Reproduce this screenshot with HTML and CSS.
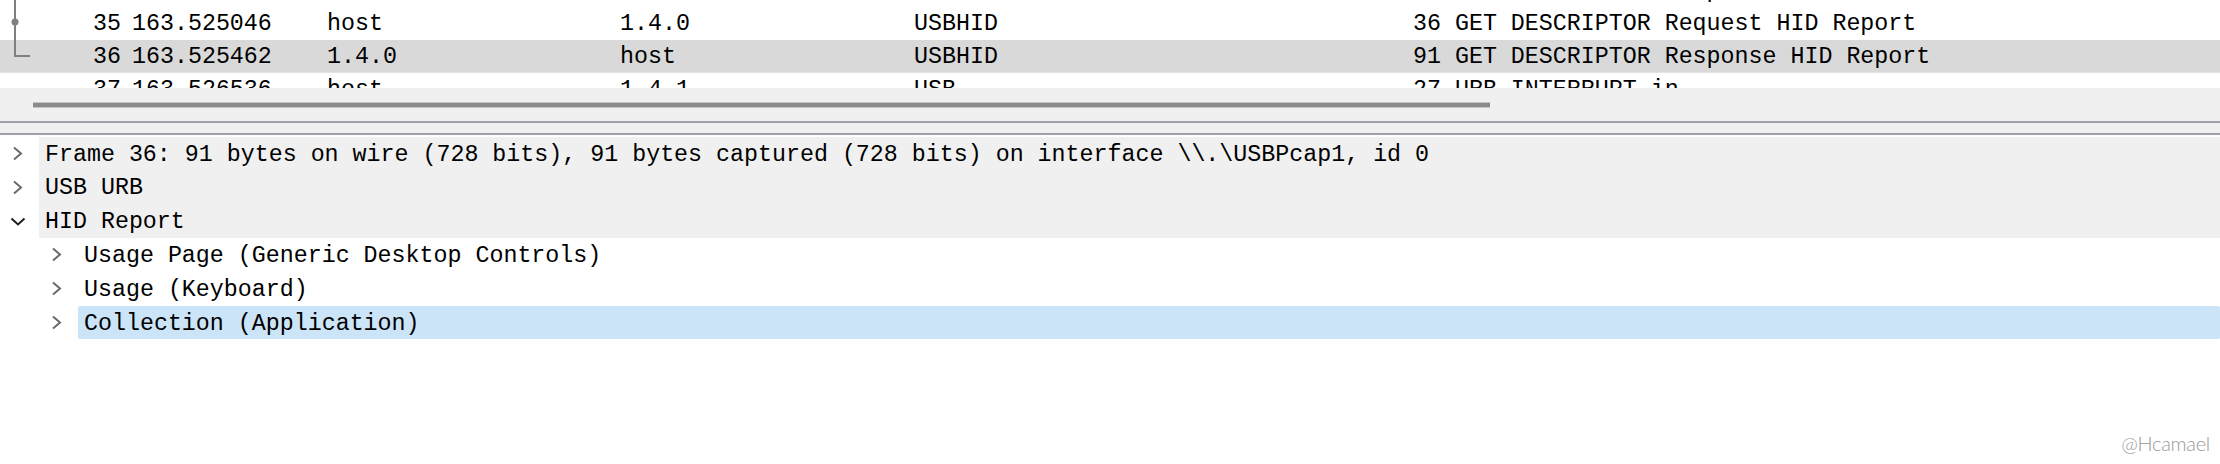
FILE: index.html
```html
<!DOCTYPE html>
<html>
<head>
<meta charset="utf-8">
<link rel="stylesheet" href="styles.css">
</head>
<body>
<div class="app">
  <div class="packet-list">
    <div class="pkt-inner">
      <div class="pkt-row">
        <div class="c-no"><svg class="rel" width="34" height="33" viewBox="0 0 34 33"><line x1="15" y1="0" x2="15" y2="33"/></svg><span>34</span></div>
        <div class="c">163.524807</div>
        <div class="c">1.4.0</div>
        <div class="c">host</div>
        <div class="c">USB</div>
        <div class="c">64 GET DESCRIPTOR Response DEVICE</div>
      </div>
      <div class="pkt-row">
        <div class="c-no"><svg class="rel" width="34" height="33" viewBox="0 0 34 33"><line x1="15" y1="0" x2="15" y2="33"/><circle cx="15" cy="15" r="3.5"/></svg><span>35</span></div>
        <div class="c">163.525046</div>
        <div class="c">host</div>
        <div class="c">1.4.0</div>
        <div class="c">USBHID</div>
        <div class="c">36 GET DESCRIPTOR Request HID Report</div>
      </div>
      <div class="pkt-row sel">
        <div class="c-no"><svg class="rel" width="34" height="33" viewBox="0 0 34 33"><polyline points="15,0 15,16 30,16"/></svg><span>36</span></div>
        <div class="c">163.525462</div>
        <div class="c">1.4.0</div>
        <div class="c">host</div>
        <div class="c">USBHID</div>
        <div class="c">91 GET DESCRIPTOR Response HID Report</div>
      </div>
      <div class="pkt-row">
        <div class="c-no"><span>37</span></div>
        <div class="c">163.526536</div>
        <div class="c">host</div>
        <div class="c">1.4.1</div>
        <div class="c">USB</div>
        <div class="c">27 URB_INTERRUPT in</div>
      </div>
    </div>
  </div>
  <div class="hscroll"><div class="thumb"></div></div>
  <div class="splitter"></div>
  <div class="details">
    <div class="drow lvl0">
      <div class="arrow"><svg width="11" height="15" viewBox="0 0 11 15"><polyline class="chev" points="2,1.5 9,7.5 2,13.5"/></svg></div>
      <div class="label shade">Frame 36: 91 bytes on wire (728 bits), 91 bytes captured (728 bits) on interface \\.\USBPcap1, id 0</div>
    </div>
    <div class="drow lvl0">
      <div class="arrow"><svg width="11" height="15" viewBox="0 0 11 15"><polyline class="chev" points="2,1.5 9,7.5 2,13.5"/></svg></div>
      <div class="label shade">USB URB</div>
    </div>
    <div class="drow lvl0">
      <div class="arrow down"><svg width="16" height="9" viewBox="0 0 16 9"><polyline class="chev dark" points="1.5,1.5 8,7.5 14.5,1.5"/></svg></div>
      <div class="label shade">HID Report</div>
    </div>
    <div class="drow lvl1">
      <div class="arrow"><svg width="11" height="15" viewBox="0 0 11 15"><polyline class="chev" points="2,1.5 9,7.5 2,13.5"/></svg></div>
      <div class="label">Usage Page (Generic Desktop Controls)</div>
    </div>
    <div class="drow lvl1">
      <div class="arrow"><svg width="11" height="15" viewBox="0 0 11 15"><polyline class="chev" points="2,1.5 9,7.5 2,13.5"/></svg></div>
      <div class="label">Usage (Keyboard)</div>
    </div>
    <div class="drow lvl1">
      <div class="arrow"><svg width="11" height="15" viewBox="0 0 11 15"><polyline class="chev" points="2,1.5 9,7.5 2,13.5"/></svg></div>
      <div class="label picked">Collection (Application)</div>
    </div>
  </div>
  <div class="watermark">@Hcamael</div>
</div>
</body>
</html>
```

FILE: styles.css
```css
html, body {
  margin: 0;
  padding: 0;
  background: #ffffff;
}
.app {
  position: relative;
  width: 2220px;
  height: 464px;
  overflow: hidden;
  background: #ffffff;
  font-family: "Liberation Mono", "DejaVu Sans Mono", monospace;
  font-size: 23.3px;
  color: #000000;
}
.packet-list {
  height: 88px;
  overflow: hidden;
  background: #ffffff;
}
.pkt-inner {
  margin-top: -26px;
}
.pkt-row {
  display: grid;
  grid-template-columns: 132px 195px 293px 294px 499px 1fr;
  height: 33px;
  line-height: 31px;
  padding-top: 2px;
  box-sizing: border-box;
  white-space: pre;
}
.pkt-row.sel {
  background: #d9d9d9;
  box-shadow: inset 0 -1px 0 #e2e2e2;
}
.c-no {
  display: flex;
  justify-content: space-between;
  align-items: stretch;
  padding-right: 11px;
  margin-top: -2px;
}
.c-no span {
  margin-left: auto;
  padding-top: 2px;
}
.rel {
  display: block;
  flex: none;
}
.rel line, .rel polyline {
  stroke: #808080;
  stroke-width: 2;
  fill: none;
}
.rel circle {
  fill: #808080;
}
.c {
  overflow: hidden;
}
.hscroll {
  height: 33px;
  background: #f0f0f0;
  padding-top: 15px;
  box-sizing: border-box;
}
.thumb {
  margin-left: 33px;
  width: 1457px;
  height: 4px;
  background: #8a8a8a;
  box-shadow: 0 -1px 0 #c4c4c4, 0 1px 0 #c4c4c4;
}
.splitter {
  height: 10px;
  background: #f0f0f0;
  border-top: 2px solid #9ea1a8;
  border-bottom: 2px solid #9ea1a8;
}
.details {
  padding-top: 1.6px;
}
.drow {
  display: flex;
  height: 33.8px;
}
.drow.lvl1 {
  padding-left: 39px;
}
.arrow {
  width: 39px;
  flex: none;
  display: flex;
  align-items: center;
  padding-left: 12px;
  box-sizing: border-box;
}
.arrow.down {
  padding-left: 10px;
}
.arrow svg {
  display: block;
}
.chev {
  fill: none;
  stroke: #6a6a6a;
  stroke-width: 2;
}
.chev.dark {
  stroke: #1e1e1e;
  stroke-width: 2;
}
.label {
  flex: 1;
  padding-left: 6px;
  padding-top: 3px;
  line-height: 30.8px;
  white-space: pre;
}
.label.shade {
  background: #f0f0f0;
}
.label.picked {
  background: #cce4f7;
  border-radius: 2px;
}
.watermark {
  position: absolute;
  right: 10px;
  bottom: 9px;
  font-family: "Lato", "DejaVu Sans", sans-serif;
  font-weight: 300;
  font-size: 20px;
  color: #9a9a9a;
  letter-spacing: -0.3px;
}
```
